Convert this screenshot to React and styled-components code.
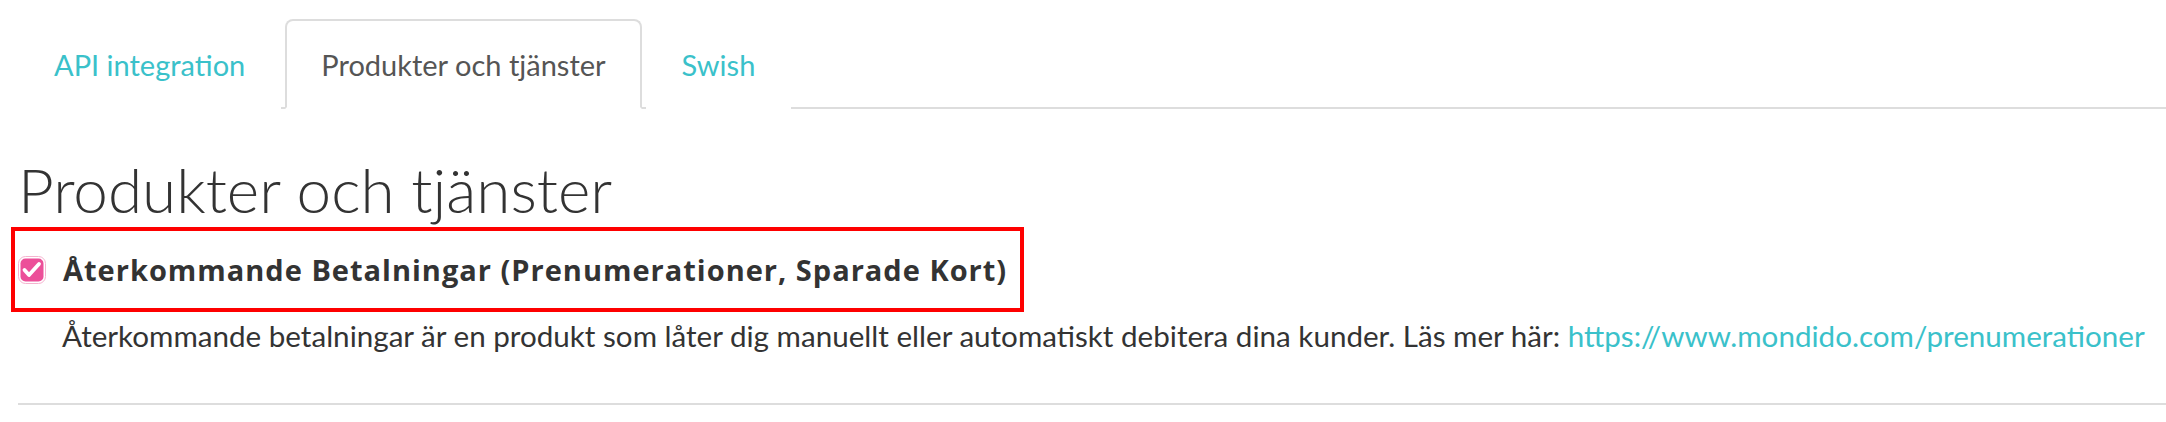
import React from "react";
import styled, { createGlobalStyle } from "styled-components";

const GlobalStyle = createGlobalStyle`
  html, body { margin: 0; padding: 0; background: #fff; }
  body { font-family: Lato, "Open Sans", sans-serif; color: #333; }
`;

const Page = styled.div`
  padding: 19px 0 0 18px;
  width: 2166px;
  box-sizing: border-box;
`;

const TabBar = styled.ul`
  display: flex;
  list-style: none;
  margin: 0;
  padding: 0;
  border-bottom: 2px solid #ddd;
`;

const Tab = styled.li`
  margin: 0 4px -2px 0;
  height: 86px;
  padding: 0 34px;
  display: flex;
  align-items: center;
  border: 2px solid ${(p) => (p.$active ? "#ddd" : "transparent")};
  border-bottom-color: ${(p) => (p.$active ? "#fff" : "transparent")};
  border-radius: 8px 8px 0 0;
  background: #fff;
  font-size: 29px;
  color: ${(p) => (p.$active ? "#555" : "#3ac1ca")};
  cursor: pointer;
`;

const Heading = styled.h1`
  margin: 46px 0 4px 0;
  font-size: 62px;
  font-weight: 300;
  line-height: 68px;
  color: #333;
`;

const Highlight = styled.div`
  display: flex;
  align-items: center;
  width: fit-content;
  height: 77px;
  margin-left: -7px;
  padding: 0 13px 0 3px;
  border: 4px solid #fe0000;
  gap: 17px;
`;

const CheckLabel = styled.span`
  font-family: "Open Sans", sans-serif;
  font-weight: 700;
  font-size: 29px;
  letter-spacing: 1px;
  line-height: 36px;
  color: #333;
`;

const Description = styled.p`
  margin: 4px 0 0 0;
  padding-left: 44px;
  font-size: 29.6px;
  line-height: 40px;
  color: #333;
  white-space: nowrap;
`;

const Link = styled.a`
  color: #3ac1ca;
  text-decoration: none;
`;

const Rule = styled.hr`
  margin: 47px 0 0 0;
  border: 0;
  border-top: 2px solid #ddd;
`;

const Checkbox = () => (
  <svg width="28" height="28" viewBox="0 0 28 28">
    <rect x="0.5" y="0.5" width="27" height="27" rx="7" fill="none" stroke="#f5b3cf" strokeWidth="1" />
    <rect x="2.5" y="2.5" width="23" height="23" rx="5" fill="#ec4f99" />
    <path d="M6.5 14 L11 19 L21 8" fill="none" stroke="#fff" strokeWidth="3.8" strokeLinecap="round" strokeLinejoin="round" />
  </svg>
);

export default function App() {
  return (
    <Page>
      <GlobalStyle />
      <TabBar>
        <Tab>API integration</Tab>
        <Tab $active>Produkter och tjänster</Tab>
        <Tab>Swish</Tab>
      </TabBar>
      <Heading>Produkter och tjänster</Heading>
      <Highlight>
        <Checkbox />
        <CheckLabel>Återkommande Betalningar (Prenumerationer, Sparade Kort)</CheckLabel>
      </Highlight>
      <Description>
        Återkommande betalningar är en produkt som låter dig manuellt eller automatiskt debitera dina kunder. Läs mer här:{" "}
        <Link href="#">https://www.mondido.com/prenumerationer</Link>
      </Description>
      <Rule />
    </Page>
  );
}
